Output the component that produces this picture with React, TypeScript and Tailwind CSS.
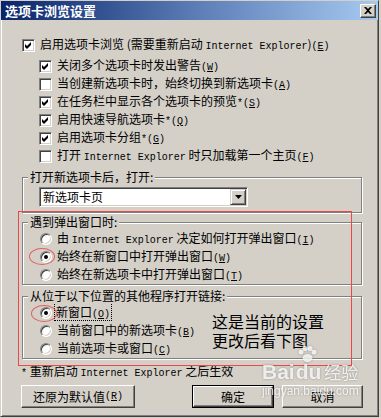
import React from "react";

const cjk = "font-['Noto_Sans_CJK_SC',sans-serif]";
const mono = "font-['Liberation_Mono',monospace] text-[10px]";

function Key({ k }: { k: string }) {
  return (
    <span className={mono}>
      (<span className="underline underline-offset-1">{k}</span>)
    </span>
  );
}

function Lat({ children }: { children: React.ReactNode }) {
  return <span className={mono}>{children}</span>;
}

function Check({ on }: { on?: boolean }) {
  return (
    <span className="flex h-[13px] w-[13px] shrink-0 items-center justify-center border border-t-[#808080] border-l-[#808080] border-r-white border-b-white bg-white shadow-[inset_1px_1px_0_#404040,inset_-1px_-1px_0_#d4d0c8]">
      {on && (
        <svg width="7" height="7" viewBox="0 0 7 7">
          <path d="M0 2 L2 4 L6 0 L6 3 L2 7 L0 5 Z" fill="#000" />
        </svg>
      )}
    </span>
  );
}

function Radio({ on }: { on?: boolean }) {
  return (
    <span className="flex h-[12px] w-[12px] shrink-0 items-center justify-center rounded-full border border-t-[#808080] border-l-[#808080] border-r-white border-b-white bg-white shadow-[inset_1px_1px_0_#404040,inset_-1px_-1px_0_#d4d0c8]">
      {on && <span className="h-[4px] w-[4px] rounded-full bg-black" />}
    </span>
  );
}

function CheckRow({ on, sub, children }: { on?: boolean; sub?: boolean; children: React.ReactNode }) {
  return (
    <div className={`flex h-[18px] items-center gap-[5px] whitespace-nowrap ${sub ? "ml-[17px]" : ""}`}>
      <Check on={on} />
      <span className="leading-[18px]">{children}</span>
    </div>
  );
}

function RadioRow({ on, children }: { on?: boolean; children: React.ReactNode }) {
  return (
    <div className="flex h-[18px] items-center gap-[5px] whitespace-nowrap">
      <Radio on={on} />
      <span className="leading-[16px]">{children}</span>
    </div>
  );
}

function Group({ label, className, children }: { label: React.ReactNode; className: string; children: React.ReactNode }) {
  return (
    <div className={`relative border border-[#808080] shadow-[inset_1px_1px_0_#fff,1px_1px_0_#fff] ${className}`}>
      <span className="absolute -top-[8px] left-[5px] bg-[#d4d0c8] px-[2px] leading-[14px] whitespace-nowrap">
        {label}
      </span>
      {children}
    </div>
  );
}

function Btn({ label, def, className }: { label: React.ReactNode; def?: boolean; className: string }) {
  const inner = (
    <div className="flex h-full w-full items-center justify-center border border-t-white border-l-white border-r-[#404040] border-b-[#404040] shadow-[inset_-1px_-1px_0_#808080]">
      {label}
    </div>
  );
  if (def) {
    return <div className={`h-[23px] border border-black ${className}`}>{inner}</div>;
  }
  return <div className={`h-[23px] ${className}`}>{inner}</div>;
}

export default function App() {
  return (
    <div className={`relative h-[418px] w-[381px] overflow-hidden bg-[#d4d0c8] text-[12px] text-black ${cjk}`}>
      <div className="flex h-[417px] w-[379px] flex-col border border-t-[#d4d0c8] border-l-[#d4d0c8] border-r-[#404040] border-b-[#404040] shadow-[inset_1px_1px_0_#fff,inset_-1px_-1px_0_#808080]">
        {/* title bar */}
        <div className="flex h-[19px] items-center justify-between bg-linear-to-r from-[#0a246a] via-[#5a7ab4] to-[#a6caf0] pr-[2px] pl-[4px]">
          <span className="text-[13px] leading-none font-bold text-white">选项卡浏览设置</span>
          <div className="flex h-[14px] w-[16px] items-center justify-center border border-t-white border-l-white border-r-[#404040] border-b-[#404040] bg-[#d4d0c8] shadow-[inset_-1px_-1px_0_#808080]">
            <svg width="8" height="7" viewBox="0 0 8 7">
              <path d="M0 0 L2 0 L4 2 L6 0 L8 0 L5 3.5 L8 7 L6 7 L4 5 L2 7 L0 7 L3 3.5 Z" fill="#000" />
            </svg>
          </div>
        </div>

        <div className="flex flex-col pt-[16px] pr-[16px] pl-[21px]">
          <CheckRow on>
            启用选项卡浏览 (需要重新启动 <Lat>Internet Explorer</Lat>)<Key k="E" />
          </CheckRow>
          <div className="mt-[3px] flex flex-col">
            <CheckRow on sub>
              关闭多个选项卡时发出警告<Key k="W" />
            </CheckRow>
            <CheckRow sub>
              当创建新选项卡时，始终切换到新选项卡<Key k="A" />
            </CheckRow>
            <CheckRow on sub>
              在任务栏中显示各个选项卡的预览<Lat>*</Lat>
              <Key k="S" />
            </CheckRow>
            <CheckRow on sub>
              启用快速导航选项卡<Lat>*</Lat>
              <Key k="Q" />
            </CheckRow>
            <CheckRow on sub>
              启用选项卡分组<Lat>*</Lat>
              <Key k="G" />
            </CheckRow>
            <CheckRow sub>
              打开 <Lat>Internet Explorer</Lat> 时只加载第一个主页<Key k="F" />
            </CheckRow>
          </div>

          <Group label="打开新选项卡后，打开:" className="mt-[12px] h-[36px] pt-[9px] pl-[16px]">
            <div className="flex h-[20px] w-[209px] items-center justify-between border border-t-[#808080] border-l-[#808080] border-r-white border-b-white bg-white pr-[1px] pl-[3px] shadow-[inset_1px_1px_0_#404040,inset_-1px_-1px_0_#d4d0c8]">
              <span className="leading-none">新选项卡页</span>
              <div className="flex h-[16px] w-[16px] items-center justify-center border border-t-[#d4d0c8] border-l-[#d4d0c8] border-r-[#404040] border-b-[#404040] bg-[#d4d0c8] shadow-[inset_1px_1px_0_#fff,inset_-1px_-1px_0_#808080]">
                <svg width="7" height="4" viewBox="0 0 7 4">
                  <path d="M0 0 L7 0 L3.5 4 Z" fill="#000" />
                </svg>
              </div>
            </div>
          </Group>

          <Group label="遇到弹出窗口时:" className="mt-[9px] pt-[7px] pl-[17px]">
            <RadioRow>
              由 <Lat>Internet Explorer</Lat> 决定如何打开弹出窗口<Key k="I" />
            </RadioRow>
            <RadioRow on>
              始终在新窗口中打开弹出窗口<Key k="W" />
            </RadioRow>
            <RadioRow>
              始终在新选项卡中打开弹出窗口<Key k="T" />
            </RadioRow>
          </Group>

          <Group label="从位于以下位置的其他程序打开链接:" className="mt-[11px] pt-[7px] pl-[17px]">
            <RadioRow on>
              <span className="-ml-[2px] px-[1px] outline outline-1 outline-dotted outline-black">
                新窗口<Key k="O" />
              </span>
            </RadioRow>
            <RadioRow>
              当前窗口中的新选项卡<Key k="B" />
            </RadioRow>
            <RadioRow>
              当前选项卡或窗口<Key k="C" />
            </RadioRow>
          </Group>

          <div className="mt-[4px] -ml-[1px] h-[16px] leading-[16px] whitespace-nowrap">
            <Lat>*</Lat> 重新启动 <Lat>Internet Explorer</Lat> 之后生效
          </div>

          <div className="mt-[6px] flex items-center">
            <Btn className="-ml-[1px] w-[114px]" label={<>还原为默认值<Key k="R" /></>} />
            <Btn def className="ml-auto w-[82px]" label="确定" />
            <Btn className="-mr-[1px] ml-[8px] w-[81px]" label="取消" />
          </div>
        </div>
      </div>

      {/* red annotation rectangle */}
      <div className="pointer-events-none absolute top-[211px] left-[18px] h-[155px] w-[334px] border border-[#e84848]" />
      <div className="pointer-events-none absolute top-[248px] left-[29px] h-[17px] w-[26px] rounded-[50%] border border-[#e06060]" />
      <div className="pointer-events-none absolute top-[305px] left-[31px] h-[17px] w-[26px] rounded-[50%] border border-[#e06060]" />
      <div className="pointer-events-none absolute top-[312px] left-[212px] text-[16px] leading-[19px] whitespace-nowrap">
        <div>这是当前的设置</div>
        <div>更改后看下图</div>
      </div>

      {/* watermark */}
      <div className="pointer-events-none absolute top-[360px] left-[262px] flex flex-col text-white/80 drop-shadow-[0_0_1px_rgba(0,0,0,0.35)]">
        <div className="flex items-end gap-[1px] font-['Liberation_Sans',sans-serif] text-[21px] leading-[24px] font-bold">
          <span>Bai</span>
          <span className="relative">
            <svg className="absolute -top-[14px] left-[1px]" width="20" height="16" viewBox="0 0 20 16">
              <circle cx="4" cy="6" r="2.5" fill="currentColor" />
              <circle cx="8" cy="2.5" r="2.5" fill="currentColor" />
              <circle cx="13" cy="2.5" r="2.5" fill="currentColor" />
              <circle cx="17" cy="6" r="2.5" fill="currentColor" />
              <ellipse cx="10.5" cy="12" rx="5" ry="4" fill="currentColor" />
            </svg>
            du
          </span>
          <span className={`ml-[2px] text-[17px] font-normal ${cjk}`}>经验</span>
        </div>
        <div className="font-['Liberation_Sans',sans-serif] text-[12px] leading-[14px]">jingyan.baidu.com</div>
      </div>
    </div>
  );
}
